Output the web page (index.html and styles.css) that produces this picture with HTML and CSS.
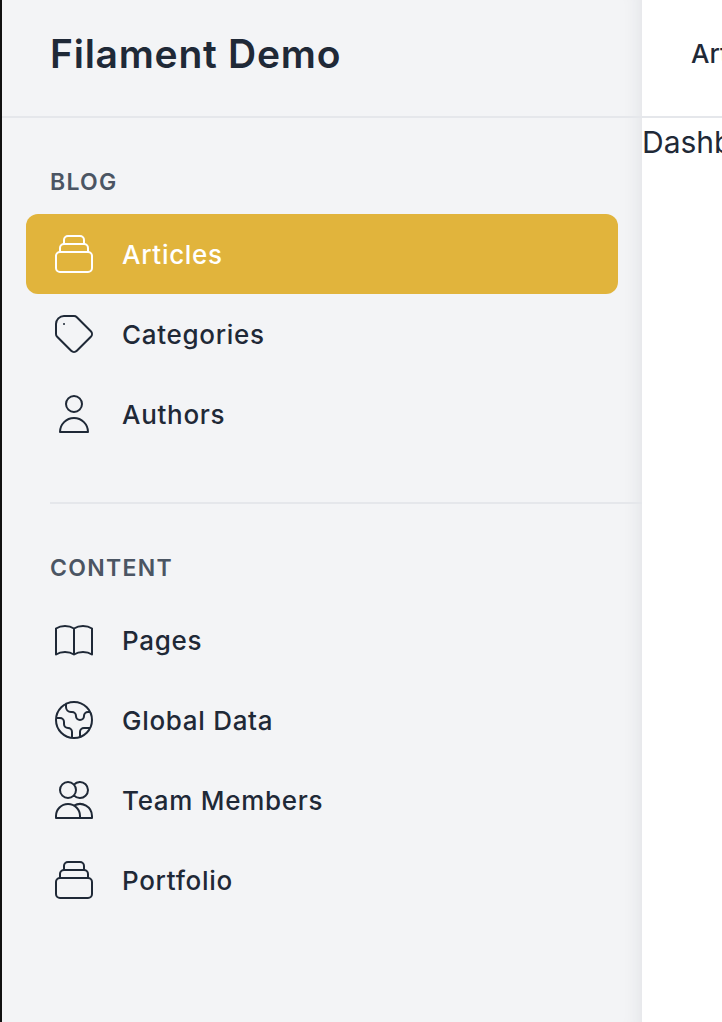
FILE: index.html
```html
<!DOCTYPE html>
<html lang="en">
<head>
  <meta charset="UTF-8">
  <meta name="viewport" content="width=device-width, initial-scale=1.0">
  <title>Filament Demo</title>
  <link rel="stylesheet" href="styles.css">
</head>
<body>
  <div class="shell">
    <aside class="sidebar">
      <header class="brand">
        <h1>Filament Demo</h1>
      </header>
      <nav class="nav">
        <div class="group">
          <p class="group_label">Blog</p>
          <ul class="group_items">
            <li><a class="item active" href="#">
              <svg class="icon" viewBox="0 0 24 24"><path d="M19 11H5m14 0a2 2 0 012 2v6a2 2 0 01-2 2H5a2 2 0 01-2-2v-6a2 2 0 012-2m14 0V9a2 2 0 00-2-2M5 11V9a2 2 0 012-2m0 0V5a2 2 0 012-2h6a2 2 0 012 2v2M7 7h10"/></svg>
              <span>Articles</span></a></li>
            <li><a class="item" href="#">
              <svg class="icon" viewBox="0 0 24 24"><path d="M7 7h.01M7 3h5c.512 0 1.024.195 1.414.586l7 7a2 2 0 010 2.828l-7 7a2 2 0 01-2.828 0l-7-7A1.994 1.994 0 013 12V7a4 4 0 014-4z"/></svg>
              <span>Categories</span></a></li>
            <li><a class="item" href="#">
              <svg class="icon" viewBox="0 0 24 24"><path d="M16 7a4 4 0 11-8 0 4 4 0 018 0zM12 14a7 7 0 00-7 7h14a7 7 0 00-7-7z"/></svg>
              <span>Authors</span></a></li>
          </ul>
        </div>
        <div class="group group_second">
          <p class="group_label">Content</p>
          <ul class="group_items">
            <li><a class="item" href="#">
              <svg class="icon" viewBox="0 0 24 24"><path d="M12 6.253v13m0-13C10.832 5.477 9.246 5 7.5 5S4.168 5.477 3 6.253v13C4.168 18.477 5.754 18 7.5 18s3.332.477 4.5 1.253m0-13C13.168 5.477 14.754 5 16.5 5c1.747 0 3.332.477 4.5 1.253v13C19.832 18.477 18.247 18 16.5 18c-1.746 0-3.332.477-4.5 1.253"/></svg>
              <span>Pages</span></a></li>
            <li><a class="item" href="#">
              <svg class="icon" viewBox="0 0 24 24"><path d="M3.055 11H5a2 2 0 012 2v1a2 2 0 002 2 2 2 0 012 2v2.945M8 3.935V5.5A2.5 2.5 0 0010.5 8h.5a2 2 0 012 2 2 2 0 104 0 2 2 0 012-2h1.064M15 20.488V18a2 2 0 012-2h3.064M21 12a9 9 0 11-18 0 9 9 0 0118 0z"/></svg>
              <span>Global Data</span></a></li>
            <li><a class="item" href="#">
              <svg class="icon" viewBox="0 0 24 24"><path d="M12 4.354a4 4 0 110 5.292M15 21H3v-1a6 6 0 0112 0v1zm0 0h6v-1a6 6 0 00-9-5.197M13 7a4 4 0 11-8 0 4 4 0 018 0z"/></svg>
              <span>Team Members</span></a></li>
            <li><a class="item" href="#">
              <svg class="icon" viewBox="0 0 24 24"><path d="M19 11H5m14 0a2 2 0 012 2v6a2 2 0 01-2 2H5a2 2 0 01-2-2v-6a2 2 0 012-2m14 0V9a2 2 0 00-2-2M5 11V9a2 2 0 012-2m0 0V5a2 2 0 012-2h6a2 2 0 012 2v2M7 7h10"/></svg>
              <span>Portfolio</span></a></li>
          </ul>
        </div>
      </nav>
    </aside>
    <main class="main">
      <div class="topbar"><span class="crumb">Articles</span></div>
      <p class="page_text">Dashboard</p>
    </main>
  </div>
</body>
</html>
```

FILE: styles.css
```css
*{
  margin: 0;
  padding: 0;
  box-sizing: border-box;
}
html,body{
  height: 100%;
  overflow: hidden;
}
body{
  font-family: "Inter", "Noto Sans", sans-serif;
  color: #1f2937;
  background-color: #fff;
}
ul{
  list-style: none;
}
a{
  color: inherit;
  text-decoration: none;
}
.shell{
  display: flex;
  height: 100%;
  border-left: 2px solid #111;
}
/* sidebar */
.sidebar{
  flex: none;
  width: 640px;
  background-color: #f3f4f6;
  box-shadow: inset -20px 0 20px -20px rgba(31, 41, 55, .1);
}
.brand{
  display: flex;
  align-items: center;
  height: 118px;
  padding: 0 0 10px 48px;
  border-bottom: 2px solid #e5e7eb;
}
.brand h1{
  font-size: 39px;
  font-weight: 600;
  letter-spacing: .75px;
}
.nav{
  padding: 48px 24px 0;
}
.group_label{
  height: 32px;
  padding-left: 24px;
  font-size: 23px;
  line-height: 32px;
  font-weight: 600;
  letter-spacing: 1.3px;
  color: #4b5563;
  text-transform: uppercase;
}
.group_items{
  margin-top: 16px;
}
.group_second{
  position: relative;
  margin-top: 48px;
  padding-top: 50px;
}
.group_second::before{
  content: "";
  position: absolute;
  top: 0;
  left: 24px;
  right: -24px;
  height: 2px;
  background-color: #e5e7eb;
}
.item{
  display: flex;
  align-items: center;
  gap: 24px;
  height: 80px;
  padding: 0 24px;
  border-radius: 12px;
  font-size: 26px;
  font-weight: 450;
  letter-spacing: .7px;
}
.item.active{
  background-color: #e1b43c;
  color: #fff;
}
.icon{
  flex: none;
  width: 48px;
  height: 48px;
  fill: none;
  stroke: currentColor;
  stroke-width: 1;
  stroke-linecap: round;
  stroke-linejoin: round;
}
/* main */
.main{
  flex: none;
  width: 800px;
  white-space: nowrap;
}
.topbar{
  display: flex;
  align-items: center;
  height: 118px;
  padding: 0 0 10px 49px;
  border-bottom: 2px solid #e5e7eb;
}
.crumb{
  font-size: 26px;
  font-weight: 450;
}
.page_text{
  font-size: 30px;
  line-height: 48px;
}
```
